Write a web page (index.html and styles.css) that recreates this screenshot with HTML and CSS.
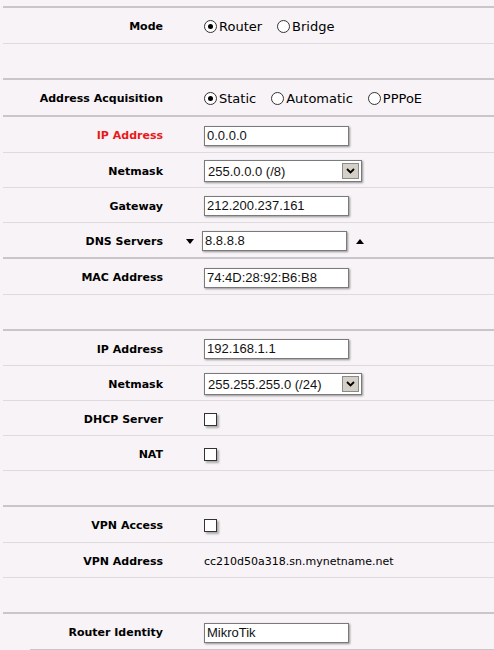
FILE: index.html
```html
<!DOCTYPE html>
<html>
<head>
<meta charset="utf-8">
<link rel="stylesheet" href="styles.css">
</head>
<body>
<div class="form">
  <div class="row g">
    <div class="label">Mode</div>
    <div class="value radios">
      <label class="opt"><span class="radio on"></span>Router</label>
      <label class="opt"><span class="radio"></span>Bridge</label>
    </div>
  </div>
  <div class="row"></div>
  <div class="row g">
    <div class="label">Address Acquisition</div>
    <div class="value radios">
      <label class="opt"><span class="radio on"></span>Static</label>
      <label class="opt"><span class="radio"></span>Automatic</label>
      <label class="opt"><span class="radio"></span>PPPoE</label>
    </div>
  </div>
  <div class="row g">
    <div class="label err">IP Address</div>
    <div class="value"><span class="input">0.0.0.0</span></div>
  </div>
  <div class="row">
    <div class="label">Netmask</div>
    <div class="value"><span class="select"><span class="sel-text">255.0.0.0 (/8)</span><span class="sel-btn"><svg width="9" height="6" viewBox="0 0 9 6"><path d="M1 1 L4.5 4.5 L8 1" fill="none" stroke="#000" stroke-width="1.8"/></svg></span></span></div>
  </div>
  <div class="row">
    <div class="label">Gateway</div>
    <div class="value"><span class="input">212.200.237.161</span></div>
  </div>
  <div class="row dns">
    <div class="label">DNS Servers</div>
    <div class="value dns-value">
      <span class="tri-down"></span>
      <span class="input">8.8.8.8</span>
      <span class="tri-up"></span>
    </div>
  </div>
  <div class="row g">
    <div class="label">MAC Address</div>
    <div class="value"><span class="input">74:4D:28:92:B6:B8</span></div>
  </div>
  <div class="row"></div>
  <div class="row g g34">
    <div class="label">IP Address</div>
    <div class="value"><span class="input">192.168.1.1</span></div>
  </div>
  <div class="row">
    <div class="label">Netmask</div>
    <div class="value"><span class="select"><span class="sel-text">255.255.255.0 (/24)</span><span class="sel-btn"><svg width="9" height="6" viewBox="0 0 9 6"><path d="M1 1 L4.5 4.5 L8 1" fill="none" stroke="#000" stroke-width="1.8"/></svg></span></span></div>
  </div>
  <div class="row">
    <div class="label">DHCP Server</div>
    <div class="value"><span class="check"></span></div>
  </div>
  <div class="row">
    <div class="label">NAT</div>
    <div class="value"><span class="check"></span></div>
  </div>
  <div class="row"></div>
  <div class="row g">
    <div class="label">VPN Access</div>
    <div class="value"><span class="check"></span></div>
  </div>
  <div class="row">
    <div class="label">VPN Address</div>
    <div class="value text">cc210d50a318.sn.mynetname.net</div>
  </div>
  <div class="row"></div>
  <div class="row g">
    <div class="label">Router Identity</div>
    <div class="value"><span class="input">MikroTik</span></div>
  </div>
  <div class="endline"></div>
</div>
</body>
</html>
```
FILE: styles.css
```css
html, body {
  margin: 0;
  padding: 0;
  background: #f7f3f6;
}
body {
  font-family: "DejaVu Sans", Verdana, sans-serif;
  color: #000;
  overflow: hidden;
}
.form {
  padding-top: 6px;
  padding-left: 3px;
}
.row {
  box-sizing: border-box;
  height: 35px;
  padding-top: 2px;
  border-top: 1px solid #dedade;
  display: grid;
  grid-template-columns: 160px 1fr;
  column-gap: 41px;
  align-items: center;
}
.row.g {
  height: 37px;
  border-top: 2px solid #c9c5c9;
}
.row.g.g34 {
  height: 36px;
}
.label {
  text-align: right;
  font-weight: bold;
  font-size: 11px;
  white-space: nowrap;
}
.label.err {
  color: #e8191b;
}
.value {
  display: flex;
  align-items: center;
}
.radios {
  font-size: 13px;
  gap: 15px;
}
.opt {
  display: flex;
  align-items: center;
  gap: 2px;
}
.radio {
  box-sizing: border-box;
  width: 13px;
  height: 13px;
  border: 1px solid #333;
  border-radius: 50%;
  background: #fff;
  display: flex;
  align-items: center;
  justify-content: center;
}
.radio.on::after {
  content: "";
  width: 5px;
  height: 5px;
  border-radius: 50%;
  background: #000;
}
.input {
  box-sizing: border-box;
  width: 145px;
  height: 20px;
  border: 1px solid #7a7a7a;
  background: #fff;
  box-shadow: 1px 1px 2px rgba(0,0,0,0.4);
  font-family: "Liberation Sans", Arial, sans-serif;
  font-size: 13px;
  line-height: 18px;
  padding-left: 2px;
  color: #111;
  white-space: nowrap;
}
.select {
  box-sizing: border-box;
  width: 158px;
  height: 22px;
  border: 1px solid #7a7a7a;
  background: #fff;
  box-shadow: 1px 1px 2px rgba(0,0,0,0.4);
  display: flex;
  align-items: center;
  justify-content: space-between;
  padding: 0 2px 0 3px;
  font-family: "Liberation Sans", Arial, sans-serif;
  font-size: 13px;
  color: #111;
}
.sel-btn {
  box-sizing: border-box;
  width: 17px;
  height: 16px;
  background: #d4d0c8;
  border: 1px solid #8a8a8a;
  display: flex;
  align-items: center;
  justify-content: center;
}
.dns-value {
  margin-left: -18px;
  gap: 9px;
}
.dns-value .input {
  margin-left: -1px;
}
.tri-down {
  width: 0;
  height: 0;
  border-left: 4px solid transparent;
  border-right: 4px solid transparent;
  border-top: 5px solid #000;
}
.tri-up {
  width: 0;
  height: 0;
  border-left: 4px solid transparent;
  border-right: 4px solid transparent;
  border-bottom: 5px solid #000;
}
.check {
  box-sizing: border-box;
  width: 13px;
  height: 13px;
  border: 1px solid #333;
  background: #fff;
  box-shadow: 2px 2px 2px rgba(0,0,0,0.3);
}
.text {
  font-size: 11px;
}
.endline {
  margin-left: 27px;
  border-top: 2px solid #c9c5c9;
}
```
